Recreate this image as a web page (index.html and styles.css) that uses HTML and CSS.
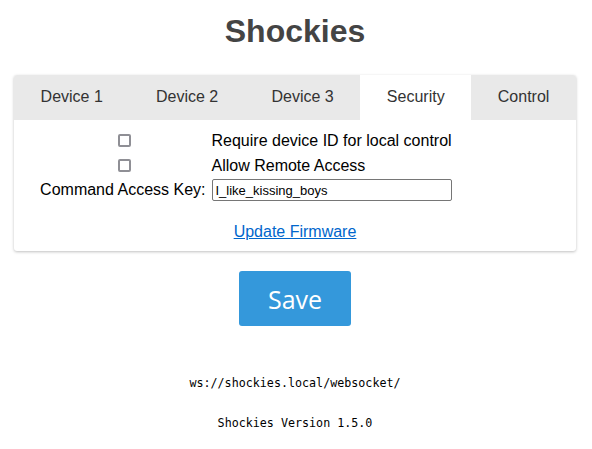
FILE: index.html
```html
<!DOCTYPE html>
<html>
<head>
<meta charset="utf-8">
<title>Shockies</title>
<link rel="stylesheet" href="styles.css">
</head>
<body>
<h1 class="title">Shockies</h1>
<div class="card">
  <div class="tabs">
    <div class="tab">Device 1</div>
    <div class="tab">Device 2</div>
    <div class="tab">Device 3</div>
    <div class="tab active">Security</div>
    <div class="tab">Control</div>
  </div>
  <div class="panel">
    <div class="form">
      <div class="cell-check"><input type="checkbox" class="check"></div>
      <div class="cell-label">Require device ID for local control</div>
      <div class="cell-check"><input type="checkbox" class="check"></div>
      <div class="cell-label">Allow Remote Access</div>
      <div class="cell-key">Command Access Key:</div>
      <div class="cell-input"><input type="text" class="key" value="I_like_kissing_boys"></div>
    </div>
    <a class="link" href="#">Update Firmware</a>
  </div>
</div>
<div class="actions"><button class="save">Save</button></div>
<p class="mono ws">ws://shockies.local/websocket/</p>
<p class="mono version">Shockies Version 1.5.0</p>
</body>
</html>
```
FILE: styles.css
```css
html, body {
  margin: 0;
  padding: 0;
  background: #fff;
}
body {
  font-family: "Liberation Sans", Arial, sans-serif;
  color: #000;
  padding: 0 16px 0 14px;
}
.title {
  margin: 0;
  padding-top: 13px;
  height: 75px;
  box-sizing: border-box;
  text-align: center;
  font-size: 32px;
  font-weight: bold;
  color: #444;
  line-height: 37px;
}
.card {
  background: #fff;
  border-radius: 3px;
  box-shadow: 0 1px 3px rgba(0,0,0,0.25);
  overflow: hidden;
}
.tabs {
  display: flex;
  background: #e9e9e9;
  height: 45px;
}
.tab {
  flex: 1 1 auto;
  text-align: center;
  line-height: 43px;
  font-size: 16px;
  color: #333;
}
.tab.active {
  background: #fff;
}
.panel {
  display: flex;
  flex-direction: column;
  align-items: center;
  padding: 8px 0 9px;
}
.form {
  display: grid;
  grid-template-columns: 167px 242px;
  column-gap: 6px;
  align-items: center;
  margin-left: -98px;
  font-size: 16px;
}
.cell-check {
  height: 25px;
  display: flex;
  align-items: center;
  justify-content: center;
  padding-left: 4px;
}
.check {
  appearance: none;
  -webkit-appearance: none;
  margin: 0;
  width: 13px;
  height: 13px;
  box-sizing: border-box;
  border: 2px solid #8f8f95;
  border-radius: 2px;
  background: #fff;
}
.cell-label {
  line-height: 25px;
}
.cell-key {
  text-align: right;
  line-height: 22px;
}
.cell-input {
  padding-top: 1px;
}
.key {
  width: 240px;
  height: 22px;
  box-sizing: border-box;
  border: 1px solid #767676;
  border-radius: 2px;
  padding: 0 3px;
  font-family: "Liberation Sans", Arial, sans-serif;
  font-size: 13px;
  color: #000;
}
.link {
  margin-top: 21px;
  font-size: 16px;
  color: #0066cc;
  text-decoration: underline;
  line-height: 20px;
}
.actions {
  display: flex;
  justify-content: center;
  padding-top: 20px;
}
.save {
  width: 112px;
  height: 55px;
  border: 0;
  border-radius: 3px;
  background: #3498db;
  color: #fff;
  font-family: "Open Sans", sans-serif;
  font-size: 25px;
}
.mono {
  font-family: "DejaVu Sans Mono", monospace;
  font-size: 11.7px;
  text-align: center;
  margin: 0;
  color: #000;
}
.ws {
  margin-top: 50px;
}
.version {
  margin-top: 26px;
}
```
